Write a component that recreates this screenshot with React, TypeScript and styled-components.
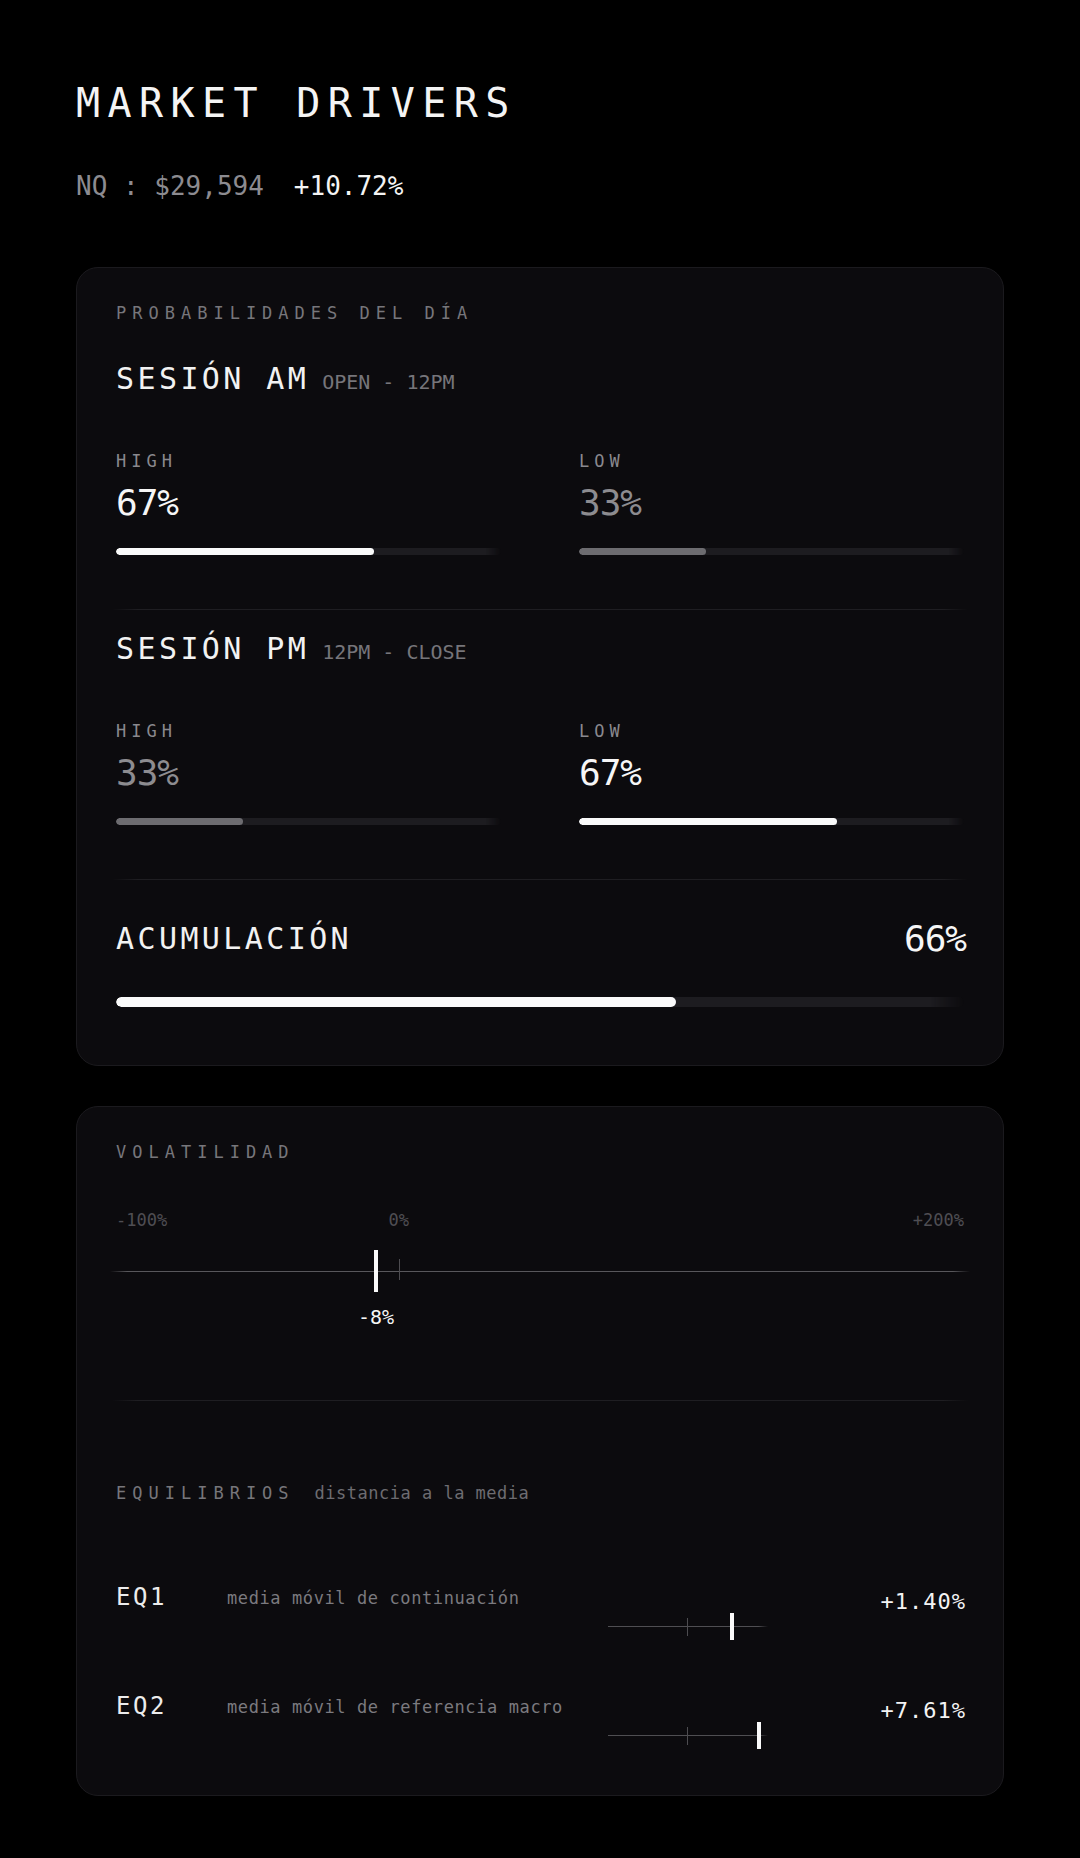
import React from 'react';
import styled, { createGlobalStyle } from 'styled-components';

const GlobalStyle = createGlobalStyle`
  html, body {
    margin: 0;
    background: #000;
  }
  body {
    font-family: "DejaVu Sans Mono", "Liberation Mono", monospace;
    color: #f2f2f2;
  }
`;

const Page = styled.div`
  box-sizing: border-box;
  min-height: 1858px;
  padding: 83px 76px 40px;
  background: #000;
`;

const Title = styled.h1`
  margin: 0;
  font-size: 40px;
  font-weight: 400;
  line-height: 1;
  letter-spacing: 7.4px;
  color: #f4f4f4;
`;

const Ticker = styled.div`
  display: flex;
  gap: 30px;
  margin-top: 50px;
  font-size: 26px;
  line-height: 1;
`;

const TickerPrice = styled.span`
  color: #8c8b90;
`;

const TickerChange = styled.span`
  color: #f4f4f4;
`;

const Cards = styled.div`
  display: flex;
  flex-direction: column;
  gap: 40px;
  margin-top: 68px;
`;

const Card = styled.section<{ $padBottom: number }>`
  border: 1px solid #1b1a1e;
  border-radius: 22px;
  background: #0c0b0e;
  padding: 37px 39px ${p => p.$padBottom}px;
`;

const SectionLabel = styled.div`
  font-size: 17px;
  line-height: 1;
  letter-spacing: 6px;
  color: #77767b;
`;

const SessionHead = styled.div<{ $top: number }>`
  display: flex;
  align-items: baseline;
  margin-top: ${p => p.$top}px;
`;

const SessionName = styled.span`
  font-size: 30px;
  line-height: 1;
  letter-spacing: 3.4px;
  color: #f2f2f2;
`;

const SessionHours = styled.span`
  margin-left: 13px;
  font-size: 20px;
  line-height: 1;
  color: #76757a;
`;

const Columns = styled.div`
  display: grid;
  grid-template-columns: 1fr 1fr;
  column-gap: 78px;
  margin-top: 59px;
`;

const StatLabel = styled.div`
  font-size: 17px;
  line-height: 1;
  letter-spacing: 5px;
  color: #8a898e;
`;

const StatValue = styled.div<{ $dim?: boolean }>`
  margin-top: 15px;
  font-size: 36px;
  line-height: 1;
  letter-spacing: -1px;
  color: ${p => (p.$dim ? '#8d8c90' : '#f6f6f6')};
`;

const Track = styled.div<{ $h: number; $top: number }>`
  height: ${p => p.$h}px;
  margin-top: ${p => p.$top}px;
  border-radius: ${p => p.$h}px;
  background: #1d1c20;
  overflow: hidden;
  -webkit-mask-image: linear-gradient(to right, #000 96%, transparent);
  mask-image: linear-gradient(to right, #000 96%, transparent);
`;

const Fill = styled.div<{ $dim?: boolean }>`
  height: 100%;
  border-radius: inherit;
  background: ${p => (p.$dim ? '#6d6c70' : '#fafafa')};
`;

const Divider = styled.div<{ $top: number }>`
  height: 1px;
  margin: ${p => p.$top}px -4px 0;
  background: linear-gradient(to right, transparent, #1f1e22 3%, #1f1e22 97%, transparent);
`;

const AccumRow = styled.div`
  display: flex;
  align-items: center;
  justify-content: space-between;
  height: 36px;
  margin-top: 41px;
`;

const AccumValue = styled.span`
  margin-right: -2px;
  font-size: 36px;
  line-height: 1;
  letter-spacing: -1px;
  color: #f6f6f6;
`;

/* volatility scale */

const AxisLabels = styled.div`
  position: relative;
  display: flex;
  justify-content: space-between;
  margin-top: 51px;
  font-size: 17px;
  line-height: 1;
  color: #4f4e53;
`;

const AxisMid = styled.span`
  position: absolute;
  top: 0;
  transform: translateX(-50%);
`;

const Scale = styled.div`
  position: relative;
  height: 42px;
  margin-top: 21px;

  &::before {
    content: '';
    position: absolute;
    left: -6px;
    right: -6px;
    top: 21px;
    height: 1px;
    background: linear-gradient(to right, transparent, #58575b 2%, #58575b 98%, transparent);
  }
`;

const ZeroTick = styled.span<{ $top: number; $h: number }>`
  position: absolute;
  top: ${p => p.$top}px;
  width: 1px;
  height: ${p => p.$h}px;
  background: #4d4c50;
`;

const Marker = styled.span<{ $w: number }>`
  position: absolute;
  top: 0;
  bottom: 0;
  width: ${p => p.$w}px;
  background: #fafafa;
  transform: translateX(-50%);
`;

const MarkerLabelRow = styled.div`
  position: relative;
  height: 20px;
  margin-top: 15px;
`;

const MarkerLabel = styled.span`
  position: absolute;
  top: 0;
  font-size: 20px;
  line-height: 1;
  color: #f6f6f6;
  transform: translateX(-50%);
`;

/* equilibrium rows */

const EqHead = styled.div`
  display: flex;
  align-items: baseline;
  margin-top: 84px;
`;

const EqHint = styled.span`
  margin-left: 20px;
  font-size: 17px;
  line-height: 1;
  letter-spacing: 0.5px;
  color: #6d6c71;
`;

const EqList = styled.div`
  display: flex;
  flex-direction: column;
  gap: 54px;
  margin-top: 83px;
`;

const EqRow = styled.div`
  display: grid;
  grid-template-columns: 111px 381px 160px 1fr;
  align-items: start;
  height: 55px;
`;

const EqName = styled.span`
  font-size: 24px;
  line-height: 1;
  letter-spacing: 2.6px;
  color: #ececec;
`;

const EqDesc = styled.span`
  margin-top: 5px;
  font-size: 17px;
  line-height: 1;
  letter-spacing: 0.6px;
  color: #7b7a7f;
`;

const MiniChart = styled.div`
  position: relative;
  height: 27px;
  margin-top: 28px;

  &::before {
    content: '';
    position: absolute;
    left: 0;
    right: 0;
    top: 13px;
    height: 1px;
    background: linear-gradient(to right, #4f4e52 94%, transparent);
  }
`;

const EqValue = styled.span`
  margin: 6px -2px 0 0;
  font-size: 22px;
  line-height: 1;
  letter-spacing: 1px;
  text-align: right;
  color: #f4f4f4;
`;

interface Stat {
  label: string;
  value: number;
  dim: boolean;
}

interface Session {
  name: string;
  hours: string;
  stats: Stat[];
}

const sessions: Session[] = [
  {
    name: 'SESIÓN AM',
    hours: 'OPEN - 12PM',
    stats: [
      { label: 'HIGH', value: 67, dim: false },
      { label: 'LOW', value: 33, dim: true },
    ],
  },
  {
    name: 'SESIÓN PM',
    hours: '12PM - CLOSE',
    stats: [
      { label: 'HIGH', value: 33, dim: true },
      { label: 'LOW', value: 67, dim: false },
    ],
  },
];

const equilibria = [
  { name: 'EQ1', desc: 'media móvil de continuación', value: '+1.40%', pos: 77.5 },
  { name: 'EQ2', desc: 'media móvil de referencia macro', value: '+7.61%', pos: 94.4 },
];

const VOL_MIN = -100;
const VOL_MAX = 200;
const volatility = -8;

const toScale = (v: number) => ((v - VOL_MIN) / (VOL_MAX - VOL_MIN)) * 100;

const SessionBlock: React.FC<{ session: Session; top: number }> = ({ session, top }) => (
  <>
    <SessionHead $top={top}>
      <SessionName>{session.name}</SessionName>
      <SessionHours>{session.hours}</SessionHours>
    </SessionHead>
    <Columns>
      {session.stats.map(stat => (
        <div key={stat.label}>
          <StatLabel>{stat.label}</StatLabel>
          <StatValue $dim={stat.dim}>{stat.value}%</StatValue>
          <Track $h={7} $top={27}>
            <Fill $dim={stat.dim} style={{ width: `${stat.value}%` }} />
          </Track>
        </div>
      ))}
    </Columns>
  </>
);

export default function App() {
  const zero = toScale(0);
  const current = toScale(volatility);

  return (
    <Page>
      <GlobalStyle />
      <Title>MARKET DRIVERS</Title>
      <Ticker>
        <TickerPrice>NQ : $29,594</TickerPrice>
        <TickerChange>+10.72%</TickerChange>
      </Ticker>

      <Cards>
        <Card $padBottom={58}>
          <SectionLabel>PROBABILIDADES DEL DÍA</SectionLabel>
          <SessionBlock session={sessions[0]} top={42} />
          <Divider $top={54} />
          <SessionBlock session={sessions[1]} top={24} />
          <Divider $top={54} />
          <AccumRow>
            <SessionName>ACUMULACIÓN</SessionName>
            <AccumValue>66%</AccumValue>
          </AccumRow>
          <Track $h={10} $top={40}>
            <Fill style={{ width: '66%' }} />
          </Track>
        </Card>

        <Card $padBottom={46}>
          <SectionLabel>VOLATILIDAD</SectionLabel>
          <AxisLabels>
            <span>-100%</span>
            <AxisMid style={{ left: `${zero}%` }}>0%</AxisMid>
            <span>+200%</span>
          </AxisLabels>
          <Scale>
            <ZeroTick $top={9} $h={21} style={{ left: `${zero}%` }} />
            <Marker $w={4} style={{ left: `${current}%` }} />
          </Scale>
          <MarkerLabelRow>
            <MarkerLabel style={{ left: `${current}%` }}>{volatility}%</MarkerLabel>
          </MarkerLabelRow>
          <Divider $top={73} />

          <EqHead>
            <SectionLabel>EQUILIBRIOS</SectionLabel>
            <EqHint>distancia a la media</EqHint>
          </EqHead>
          <EqList>
            {equilibria.map(eq => (
              <EqRow key={eq.name}>
                <EqName>{eq.name}</EqName>
                <EqDesc>{eq.desc}</EqDesc>
                <MiniChart>
                  <ZeroTick $top={5} $h={18} style={{ left: '49.4%' }} />
                  <Marker $w={4} style={{ left: `${eq.pos}%` }} />
                </MiniChart>
                <EqValue>{eq.value}</EqValue>
              </EqRow>
            ))}
          </EqList>
        </Card>
      </Cards>
    </Page>
  );
}
